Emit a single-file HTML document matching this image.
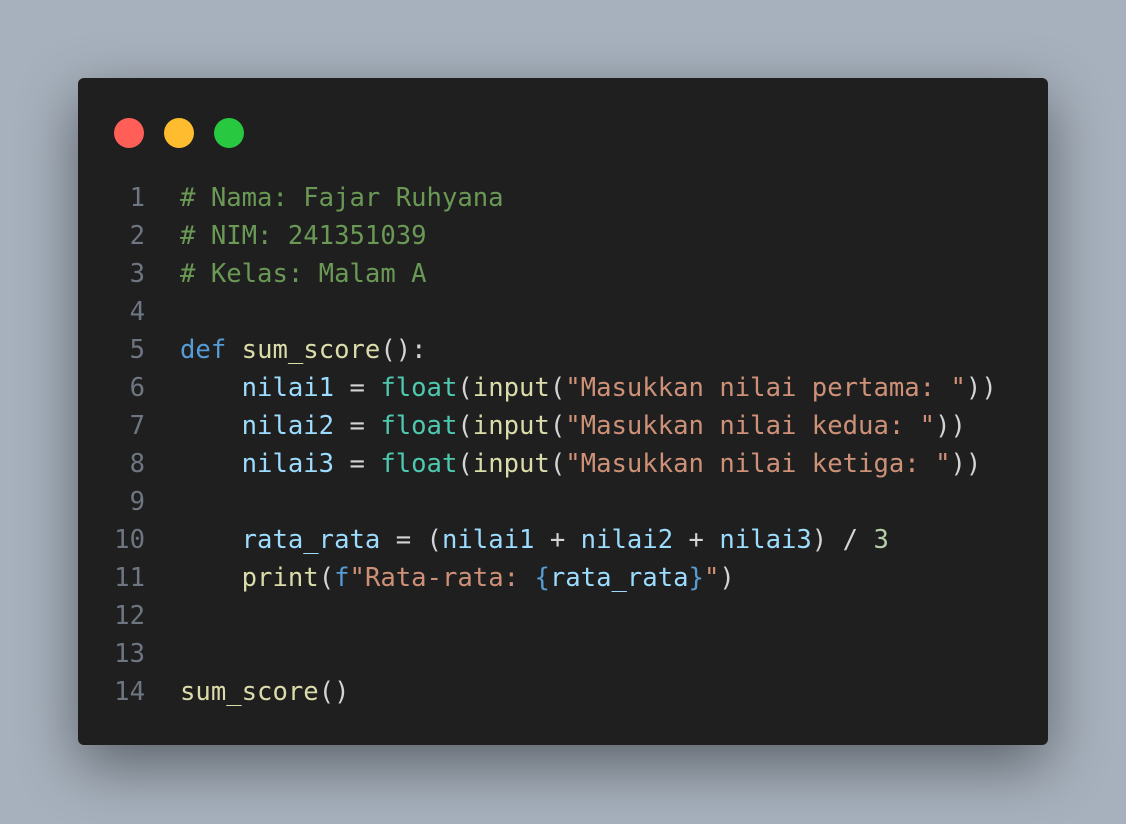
<!DOCTYPE html>
<html><head><style>
html,body{margin:0;padding:0;width:1126px;height:824px;overflow:hidden;background:#a7b1bd;}
.card{position:absolute;left:78px;top:78px;width:970px;height:667px;background:#1f1f1f;border-radius:6px;box-shadow:0 20px 60px rgba(0,0,0,0.45);}
.dot{position:absolute;top:118px;width:30px;height:30px;border-radius:50%;}
.code{position:absolute;left:0;top:179px;font-family:"DejaVu Sans Mono","Liberation Mono",monospace;font-size:25.6px;line-height:38px;white-space:pre;color:#d4d4d4;}
.ln{position:absolute;left:90px;width:55px;text-align:right;color:#6e7681;}
.tx{position:absolute;left:180px;}
.c{color:#6a9955}.k{color:#569cd6}.f{color:#dcdcaa}.v{color:#9cdcfe}.b{color:#4ec9b0}.s{color:#ce9178}.n{color:#b5cea8}
</style></head><body>
<div class="card"></div>
<div class="dot" style="left:114px;background:#ff5f57"></div>
<div class="dot" style="left:164px;background:#febc2e"></div>
<div class="dot" style="left:214px;background:#28c840"></div>
<div class="code">
<div class="ln" style="top:0">1</div><div class="tx" style="top:0"><span class="c"># Nama: Fajar Ruhyana</span></div>
<div class="ln" style="top:38px">2</div><div class="tx" style="top:38px"><span class="c"># NIM: 241351039</span></div>
<div class="ln" style="top:76px">3</div><div class="tx" style="top:76px"><span class="c"># Kelas: Malam A</span></div>
<div class="ln" style="top:114px">4</div>
<div class="ln" style="top:152px">5</div><div class="tx" style="top:152px"><span class="k">def</span> <span class="f">sum_score</span>():</div>
<div class="ln" style="top:190px">6</div><div class="tx" style="top:190px">    <span class="v">nilai1</span> = <span class="b">float</span>(<span class="f">input</span>(<span class="s">"Masukkan nilai pertama: "</span>))</div>
<div class="ln" style="top:228px">7</div><div class="tx" style="top:228px">    <span class="v">nilai2</span> = <span class="b">float</span>(<span class="f">input</span>(<span class="s">"Masukkan nilai kedua: "</span>))</div>
<div class="ln" style="top:266px">8</div><div class="tx" style="top:266px">    <span class="v">nilai3</span> = <span class="b">float</span>(<span class="f">input</span>(<span class="s">"Masukkan nilai ketiga: "</span>))</div>
<div class="ln" style="top:304px">9</div>
<div class="ln" style="top:342px">10</div><div class="tx" style="top:342px">    <span class="v">rata_rata</span> = (<span class="v">nilai1</span> + <span class="v">nilai2</span> + <span class="v">nilai3</span>) / <span class="n">3</span></div>
<div class="ln" style="top:380px">11</div><div class="tx" style="top:380px">    <span class="f">print</span>(<span class="k">f</span><span class="s">"Rata-rata: </span><span class="k">{</span><span class="v">rata_rata</span><span class="k">}</span><span class="s">"</span>)</div>
<div class="ln" style="top:418px">12</div>
<div class="ln" style="top:456px">13</div>
<div class="ln" style="top:494px">14</div><div class="tx" style="top:494px"><span class="f">sum_score</span>()</div>
</div>
</body></html>
